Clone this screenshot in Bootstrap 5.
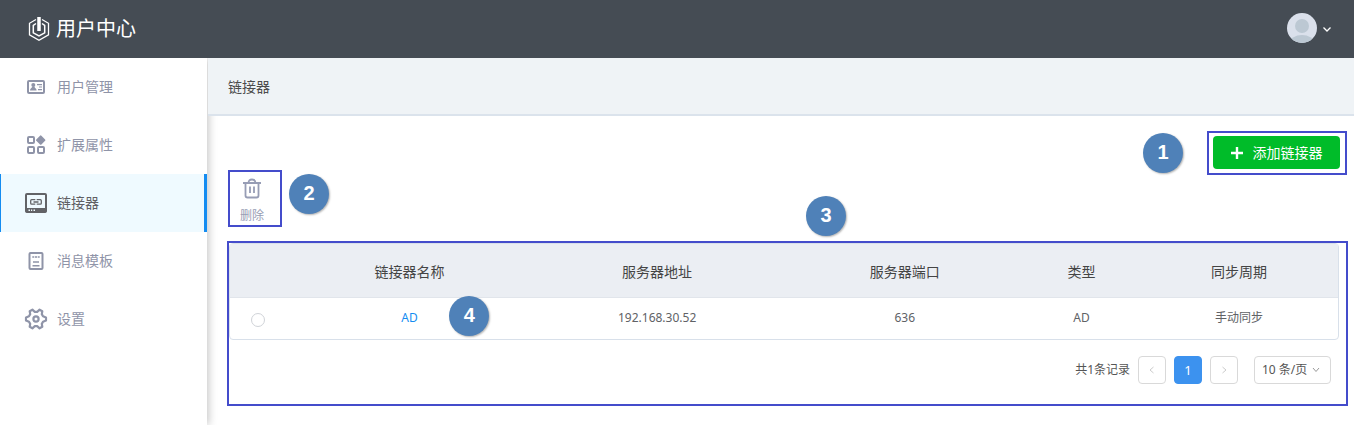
<!DOCTYPE html>
<html lang="zh-CN">
<head>
<meta charset="utf-8">
<meta name="viewport" content="width=device-width, initial-scale=1">
<title>用户中心</title>
<link href="https://cdn.jsdelivr.net/npm/bootstrap@5.3.0/dist/css/bootstrap.min.css" rel="stylesheet">
<style>
  body { font-family: "Noto Sans", "Noto Sans CJK SC", sans-serif; font-size: 14px; line-height: 20px; color: #4c4c4c; }
  svg { display: block; flex: none; }

  .topbar { height: 58px; background: #454c54; padding: 0 21px 0 28px; position: relative; z-index: 3; }
  .topbar .navbar-brand { font-size: 20px; line-height: 28px; color: #fff; gap: 6px; }
  .user-btn { gap: 4px; border: 0; background: none; margin-bottom: 2px; }

  .side { width: 207px; flex: none; position: relative; z-index: 1; background: #fff; box-shadow: 2px 0 8px rgba(0, 0, 0, .22); }
  .side .nav-link { height: 58px; padding: 0 23px; gap: 9px; color: #8f94a8; border-left: 1px solid transparent; border-right: 3px solid transparent; border-radius: 0; }
  .side .nav-link.active { color: #5f5f63; background: #effaff; border-left-color: #148cf1; border-right-color: #148cf1; }

  .page-title { height: 58px; padding: 2px 20px 0; background: #eff3f6; border-bottom: 2px solid #dbe3ec; position: relative; z-index: 2; margin-left: 1px; }
  .page-title h1 { font-size: 14px; line-height: 20px; font-weight: 400; }
  .work { padding: 15px 6px 19px 20px; }

  .frame { border: 2px solid #444ccb; }
  .step { width: 40px; height: 40px; flex: none; border-radius: 50%; background: #4f81b8; color: #fff; font: bold 20px/38px "Liberation Sans", sans-serif; text-align: center; box-shadow: 1px 1px 2px rgba(0, 0, 0, .3); }
  .step-table { position: absolute; left: 577px; top: -47px; }
  .step-name { position: absolute; left: 164px; top: -2px; }

  .btn-add { height: 33px; width: 127px; padding: 0; gap: 10px; color: #fff; background: #00bc29; border: 0; font-size: 14px; border-radius: 4px; }
  .btn-add:hover { color: #fff; background: #00a824; }
  .top-right { margin-right: 1px; }
  .add-frame { padding: 3px 5px 4px 4px; }
  .tools { margin: 39px 0 0 1px; gap: 7px; }
  .btn-del { width: 50px; height: 53px; padding: 6px 6px 0 0; border: 0; font-size: 12px; line-height: 18px; color: #979db5; gap: 8px; border-radius: 0; }

  .list-frame { margin-top: 14px; position: relative; padding-bottom: 20px; }
  .list-wrap { border: 1px solid #d8e0ea; border-radius: 4px; margin-right: 7px; }
  .conn { table-layout: fixed; margin: 0; text-align: center; vertical-align: middle; border-radius: 4px; }
  .conn th { height: 53px; padding: 3px 0 0; font-weight: 400; color: #444; background: #ebeef3; border-bottom: 1px solid #e1e5eb; vertical-align: middle; }
  .conn td { height: 42px; padding: 0; font-size: 12px; color: #606266; border: 0; position: relative; }
  .conn th:last-child, .conn td:last-child { padding-left: 6px; }
  .conn a { color: #148cf1; text-decoration: none; }
  .conn .form-check-input { width: 14px; height: 14px; margin: 3px auto 0; display: block; border-color: #d0d3d8; }

  .pager { margin: 16px 15px 0 0; font-size: 12px; gap: 8px; color: #555; }
  .pager .page-item .page-link { width: 28px; height: 28px; margin: 0; padding: 0; font-size: 13px; border-radius: 4px; border-color: #d9d9d9; color: #ccc; }
  .pager .pagination .page-item:not(:first-child) .page-link { margin-left: 0; }
  .pager .page-item.active .page-link { background: #3c92ef; border-color: #3c92ef; color: #fff; }
  .pager .form-select { width: 77px; height: 28px; margin-left: 8px; padding: 0 7px; font-size: 12px; line-height: 18px; color: #555; border-color: #d9d9d9; border-radius: 4px;
    background-image: url("data:image/svg+xml,%3Csvg xmlns='http://www.w3.org/2000/svg' viewBox='0 0 8 8'%3E%3Cpath d='M1 2l3 3.5L7 2' fill='none' stroke='%23999'/%3E%3C/svg%3E"); background-size: 8px 8px; background-position: right 10px center; }
</style>
</head>
<body>
<div class="d-flex flex-column min-vh-100">
  <header class="topbar d-flex align-items-center justify-content-between">
    <a class="navbar-brand d-flex align-items-center m-0" href="#">
      <svg width="22" height="26" viewBox="0 0 22 26" fill="none" stroke="#fff">
        <path d="M8 3.500L1.500 7.300v11.500L11 24.200l9.500-5.400V7.300L14 3.500" stroke-width="1.300"/>
        <path d="M8 7.500L5.300 9.500v7.300L11 20l5.700-3.200V9.500L14 7.500" stroke-width="1.500"/>
        <path d="M11 1v14" stroke-width="3.500"/>
      </svg>
      <span>用户中心</span>
    </a>
    <button class="user-btn d-flex align-items-center p-0" type="button" aria-label="用户菜单">
      <svg width="30" height="30" viewBox="0 0 30 30">
        <defs><clipPath id="face"><circle cx="15" cy="15" r="15"/></clipPath></defs>
        <g clip-path="url(#face)"><rect width="30" height="30" fill="#dae0eb"/><circle cx="15" cy="13" r="7" fill="#bcc8d3"/><ellipse cx="15" cy="30" rx="12" ry="8" fill="#bcc8d3"/></g>
      </svg>
      <svg width="12" height="12" viewBox="0 0 12 12"><path d="M2.500 5.500l3.500 3.500L9.500 5.500" fill="none" stroke="#fff" stroke-width="1.300"/></svg>
    </button>
  </header>

  <div class="d-flex flex-grow-1">
    <nav class="side nav flex-column flex-nowrap">
      <a class="nav-link d-flex align-items-center" href="#">
        <svg width="24" height="24" viewBox="0 0 24 24" fill="#8f94a8"><rect x="4" y="6" width="16" height="12" rx="1" fill="none" stroke="#8f94a8" stroke-width="2"/><circle cx="9.300" cy="10" r="2"/><path d="M6 15.500c0-2 1.500-2 2.300-4h2c.8 2 2.300 2 2.300 4zM13 9h5v1.200h-5zM15 11.500h3v1h-3zM14 14h4v1.200h-4z"/></svg>
        <span>用户管理</span>
      </a>
      <a class="nav-link d-flex align-items-center" href="#">
        <svg width="24" height="24" viewBox="0 0 24 24" fill="none" stroke="#8f94a8" stroke-width="2"><rect x="4" y="4" width="6" height="6" rx="1"/><rect x="4" y="14" width="6" height="6" rx="1"/><rect x="14" y="14" width="6" height="6" rx="1"/><path d="M16.700 3.400l3.700 3.700-3.700 3.700-3.700-3.700z" fill="#8f94a8" stroke-linejoin="round"/></svg>
        <span>扩展属性</span>
      </a>
      <a class="nav-link active d-flex align-items-center" href="#" aria-current="page">
        <svg width="24" height="24" viewBox="0 0 24 24" fill="none" stroke="#626367"><rect x="2" y="3" width="20" height="18" rx="1" stroke-width="2"/><path d="M2 17.500h20V21H2z" fill="#626367"/><path d="M11.300 13.200H7.700q-1 0-1-1V9.700q0-1 1-1h3.600M12.700 8.700h3.600q1 0 1 1v2.500q0 1-1 1h-3.600M9.500 11h5" stroke-width="1.300"/><path d="M4.500 19.200H6M7 19.200h1.200M9.500 19.200h1.500" stroke="#effaff" stroke-width="1.600"/></svg>
        <span>链接器</span>
      </a>
      <a class="nav-link d-flex align-items-center" href="#">
        <svg width="24" height="24" viewBox="0 0 24 24" fill="none" stroke="#8f94a8"><rect x="5.500" y="4" width="13" height="16" rx="1" stroke-width="2"/><path d="M8.300 8h2M11 8h2M13.700 8h2M9 13h6M8.500 16.800h7" stroke-width="1.600"/></svg>
        <span>消息模板</span>
      </a>
      <a class="nav-link d-flex align-items-center" href="#">
        <svg width="24" height="24" viewBox="0 0 24 24" fill="none" stroke="#8f94a8" stroke-width="2.200" stroke-linejoin="round"><path d="M22 10.400v3.200l-3 1.200-1.200 2.100.5 2.900-2.700 1.500-2.400-2.100h-2.400l-2.400 2.100-2.700-1.500.5-2.900L5 14.800l-3-1.200v-3.200l3-1.200 1.200-2.100-.5-2.900 2.700-1.500 2.400 2.100h2.400l2.400-2.100 2.700 1.500-.5 2.900L19 9.200z"/><circle cx="12" cy="12" r="2.600"/></svg>
        <span>设置</span>
      </a>
    </nav>

    <main class="flex-grow-1">
      <div class="page-title d-flex align-items-center"><h1 class="m-0">链接器</h1></div>
      <div class="work">
        <div class="d-flex justify-content-between align-items-start">
          <div class="tools d-flex align-items-start">
            <div class="frame">
              <button class="btn btn-del d-flex flex-column align-items-center" type="button">
                <svg width="20" height="21" viewBox="0 0 20 21" fill="none" stroke="#979db5" stroke-width="1.800"><path d="M1 5h18M3.500 5v12.500q0 2 2 2h9q2 0 2-2V5M6.500 5q0-3.500 3.500-3.500T13.500 5M8 8.500v6.500M12 8.500v6.500"/></svg>
                <span>删除</span>
              </button>
            </div>
            <div class="step mt-1">2</div>
          </div>
          <div class="top-right d-flex align-items-center gap-4">
            <div class="step">1</div>
            <div class="frame add-frame">
              <button class="btn btn-add d-flex align-items-center justify-content-center" type="button">
                <svg width="12" height="12" viewBox="0 0 12 12"><path d="M6 0v12M0 6h12" stroke="#fff" stroke-width="2.400"/></svg>
                <span>添加链接器</span>
              </button>
            </div>
          </div>
        </div>

        <div class="frame list-frame">
          <div class="step step-table">3</div>
          <div class="list-wrap">
            <table class="table conn">
              <colgroup><col style="width:5%"><col style="width:22.400%"><col style="width:22.300%"><col style="width:22.400%"><col style="width:9.500%"><col style="width:18.400%"></colgroup>
              <thead>
                <tr><th scope="col" aria-label="选择"></th><th scope="col">链接器名称</th><th scope="col">服务器地址</th><th scope="col">服务器端口</th><th scope="col">类型</th><th scope="col">同步周期</th></tr>
              </thead>
              <tbody>
                <tr>
                  <td><input class="form-check-input" type="radio" name="connector" aria-label="选择 AD"></td>
                  <td><a href="#">AD</a><div class="step step-name">4</div></td>
                  <td>192.168.30.52</td><td>636</td><td>AD</td><td>手动同步</td>
                </tr>
              </tbody>
            </table>
          </div>
          <div class="pager d-flex align-items-center justify-content-end">
            <span>共1条记录</span>
            <ul class="pagination m-0 gap-2">
              <li class="page-item"><button class="page-link d-flex align-items-center justify-content-center" type="button" aria-label="上一页"><svg width="8" height="8" viewBox="0 0 8 8"><path d="M5.500 1L2 4l3.500 3" fill="none" stroke="#ccc"/></svg></button></li>
              <li class="page-item active"><button class="page-link" type="button">1</button></li>
              <li class="page-item"><button class="page-link d-flex align-items-center justify-content-center" type="button" aria-label="下一页"><svg width="8" height="8" viewBox="0 0 8 8"><path d="M2.500 1L6 4 2.500 7" fill="none" stroke="#ccc"/></svg></button></li>
            </ul>
            <select class="form-select" aria-label="每页条数"><option>10 条/页</option><option>20 条/页</option></select>
          </div>
        </div>
      </div>
    </main>
  </div>
</div>
<script src="https://cdn.jsdelivr.net/npm/bootstrap@5.3.0/dist/js/bootstrap.bundle.min.js"></script>
</body>
</html>
